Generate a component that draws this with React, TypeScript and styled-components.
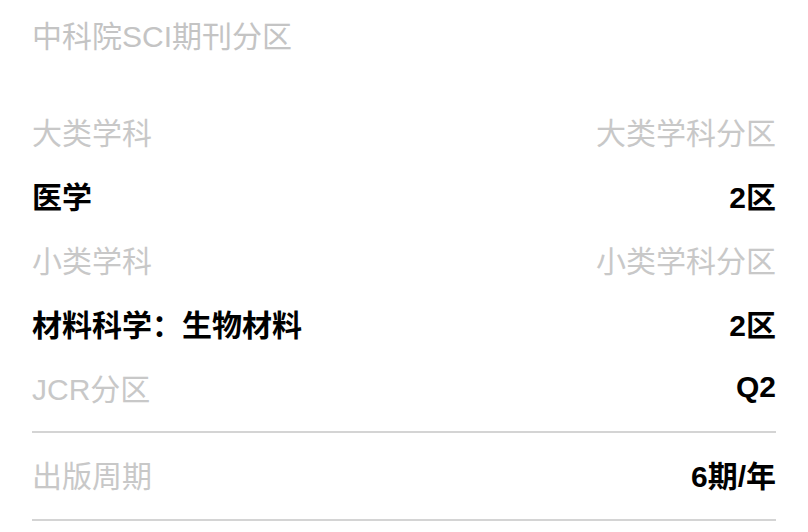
import { createGlobalStyle, styled } from "styled-components"

const GlobalStyle = createGlobalStyle`
  html, body {
    margin: 0;
    padding: 0;
    background: #ffffff;
  }
  body {
    font-family: "Liberation Sans", "Noto Sans CJK SC", sans-serif;
  }
`;

const Page = styled.div`
  width: 808px;
  height: 532px;
  box-sizing: border-box;
  padding: 0 32px;
  overflow: hidden;
`;

const Title = styled.h1`
  margin: 0 0 27px 0;
  height: 74px;
  line-height: 74px;
  font-size: 30px;
  font-weight: normal;
  color: #c4c4c4;
`;

const List = styled.div`
  display: flex;
  flex-direction: column;
`;

const Row = styled.div<{ $divided?: boolean }>`
  display: flex;
  align-items: center;
  justify-content: space-between;
  box-sizing: border-box;
  height: ${(p) => (p.$divided ? "90px" : "64px")};
  padding-bottom: 5px;
  font-size: 30px;
  ${(p) =>
    p.$divided &&
    `
    margin-top: 10px;
    border-top: 2px solid #d4d4d4;
    border-bottom: 2px solid #d4d4d4;
  `}
`;

const Label = styled.span`
  color: #c8c8c8;
`;

const Value = styled.span`
  color: #000000;
  font-weight: bold;
`;

export default function App() {
  return (
    <Page>
      <GlobalStyle />
      <Title>中科院SCI期刊分区</Title>
      <List>
        <Row>
          <Label>大类学科</Label>
          <Label>大类学科分区</Label>
        </Row>
        <Row>
          <Value>医学</Value>
          <Value>2区</Value>
        </Row>
        <Row>
          <Label>小类学科</Label>
          <Label>小类学科分区</Label>
        </Row>
        <Row>
          <Value>材料科学：生物材料</Value>
          <Value>2区</Value>
        </Row>
        <Row>
          <Label>JCR分区</Label>
          <Value>Q2</Value>
        </Row>
        <Row $divided>
          <Label>出版周期</Label>
          <Value>6期/年</Value>
        </Row>
      </List>
    </Page>
  )
}
